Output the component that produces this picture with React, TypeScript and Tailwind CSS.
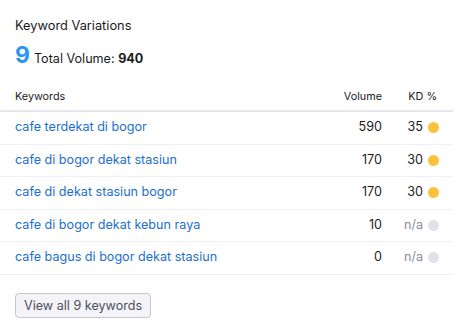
const rows = [
	{ keyword: 'cafe terdekat di bogor', volume: '590', kd: '35', active: true },
	{ keyword: 'cafe di bogor dekat stasiun', volume: '170', kd: '30', active: true },
	{ keyword: 'cafe di dekat stasiun bogor', volume: '170', kd: '30', active: true },
	{ keyword: 'cafe di bogor dekat kebun raya', volume: '10', kd: 'n/a', active: false },
	{ keyword: 'cafe bagus di bogor dekat stasiun', volume: '0', kd: 'n/a', active: false },
]

export default function App() {
	return (
		<div className="w-[462px] h-[319px] bg-white text-[#191b23] font-['Inter','Liberation_Sans',sans-serif] overflow-hidden">
			<div className="pl-[15px] pt-[17px]">
				<h2 className="text-[12.8px] leading-[18px]">Keyword Variations</h2>
				<div className="flex items-baseline gap-[4px] mt-[6px]">
					<span className="text-[23px] leading-[28px] font-bold text-[#2b95f0]">9</span>
					<span className="text-[12.6px]">
						Total Volume: <span className="font-bold">940</span>
					</span>
				</div>
			</div>

			<div className="w-[453px] mt-[16px]">
				<div className="flex items-center h-[27px] border-b-2 border-[#e6e7ed] text-[10.8px]">
					<div className="flex-1 pl-[15px]">Keywords</div>
					<div className="w-[100px] text-right">Volume</div>
					<div className="w-[71px] text-right pr-[16px]">KD %</div>
				</div>
				{rows.map(row => (
					<div key={row.keyword} className="flex items-center h-[32.5px] border-b border-[#eeeff3] text-[12.6px]">
						<div className="flex-1 pl-[15px] text-[#1b6fcf]">{row.keyword}</div>
						<div className="w-[100px] text-right">{row.volume}</div>
						<div className="w-[71px] flex items-center justify-end gap-[5px] pr-[14px]">
							<span className={row.active ? '' : 'text-[#8a8d99]'}>{row.kd}</span>
							<span className={`w-[11px] h-[11px] rounded-full ${row.active ? 'bg-[#fdc23c]' : 'bg-[#e0e1e9]'}`} />
						</div>
					</div>
				))}
			</div>

			<div className="pl-[15px] pt-[17px]">
				<button className="h-[25px] px-[8px] rounded-[4px] border border-[#c4c7cf] bg-[#f4f4f8] text-[12.6px] text-[#4d5060]">
					View all 9 keywords
				</button>
			</div>
		</div>
	)
}
